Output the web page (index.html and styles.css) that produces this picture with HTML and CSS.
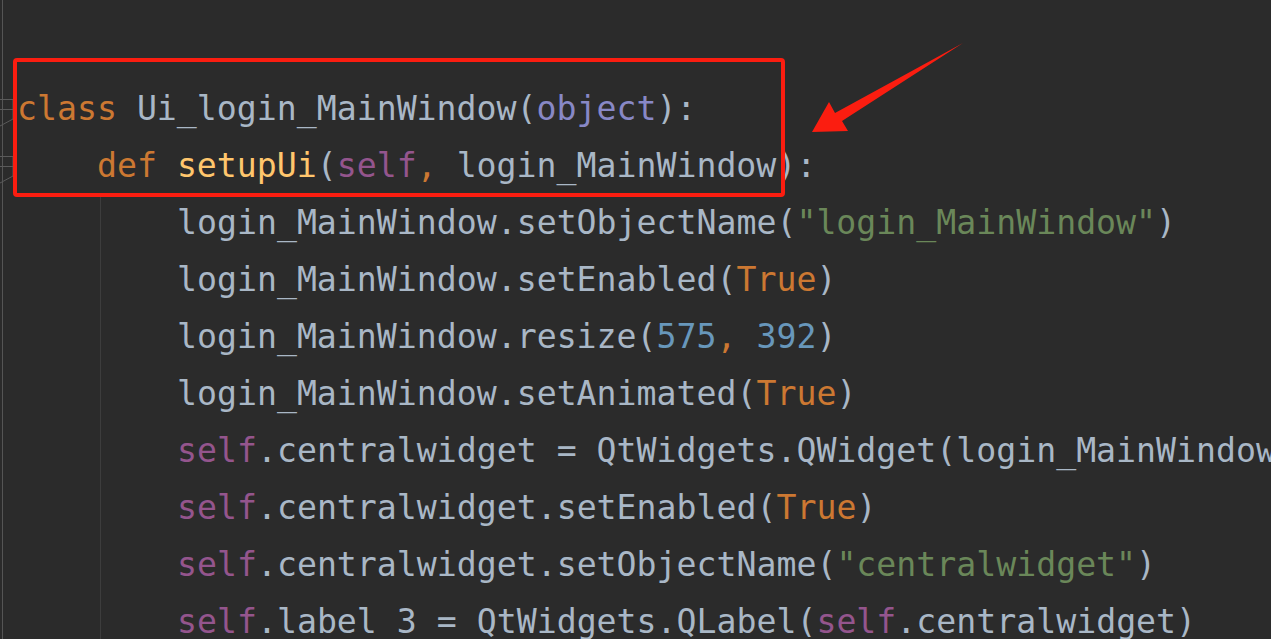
FILE: index.html
```html
<!DOCTYPE html>
<html lang="en">
<head>
    <meta charset="UTF-8">
    <title>login_MainWindow.py</title>
    <link rel="stylesheet" href="styles.css">
</head>
<body>
    <div class="editor">
        <div class="gutter">
            <svg width="16" height="639" viewBox="0 0 16 639">
                <line x1="2.5" y1="0" x2="2.5" y2="639" stroke="#555" stroke-width="1"/>
                <!-- fold markers, cut off by the crop -->
                <path d="M0 99.5H13M0 109.5H13M0 126L13 119V99.5" fill="none" stroke="#5a5a5a" stroke-width="1"/>
                <path d="M0 156.5H13M0 166.5H13M0 183L13 176V156.5" fill="none" stroke="#5a5a5a" stroke-width="1"/>
            </svg>
        </div>
        <div class="code">
            <div class="line"><span class="kw">class</span> Ui_login_MainWindow(<span class="bi">object</span>):</div>
            <div class="line">    <span class="kw">def</span> <span class="fn">setupUi</span>(<span class="self">self</span><span class="kw">,</span> login_MainWindow):</div>
            <div class="guide">
                <div class="line">login_MainWindow.setObjectName(<span class="str">"login_MainWindow"</span>)</div>
                <div class="line">login_MainWindow.setEnabled(<span class="kw">True</span>)</div>
                <div class="line">login_MainWindow.resize(<span class="num">575</span><span class="kw">,</span> <span class="num">392</span>)</div>
                <div class="line">login_MainWindow.setAnimated(<span class="kw">True</span>)</div>
                <div class="line"><span class="self">self</span>.centralwidget = QtWidgets.QWidget(login_MainWindow)</div>
                <div class="line"><span class="self">self</span>.centralwidget.setEnabled(<span class="kw">True</span>)</div>
                <div class="line"><span class="self">self</span>.centralwidget.setObjectName(<span class="str">"centralwidget"</span>)</div>
                <div class="line"><span class="self">self</span>.label_3 = QtWidgets.QLabel(<span class="self">self</span>.centralwidget)</div>
            </div>
        </div>
    </div>

    <div class="highlight"></div>
    <svg class="arrow" width="1271" height="639" viewBox="0 0 1271 639">
        <polygon points="963,43 842,121 848,131 812,132 829,102 835,113" fill="#fb1d10"/>
    </svg>
</body>
</html>
```
FILE: styles.css
```css
html, body {
    margin: 0;
    padding: 0;
    background-color: #2b2b2b;
    overflow: hidden;
}

body {
    width: 1271px;
    height: 639px;
    position: relative;
}

.editor {
    display: flex;
    height: 639px;
}

.gutter {
    width: 17px;
    flex: none;
}

.gutter svg {
    display: block;
}

.code {
    flex: 1;
    min-width: 0;
    padding-top: 80px;
    font-family: 'DejaVu Sans Mono', monospace;
    font-size: 33.2px;
    color: #a9b7c6;
    overflow: hidden;
}

.line {
    height: 57px;
    line-height: 57px;
    white-space: pre;
}

.guide {
    margin-left: 83px;
    padding-left: 76px;
    border-left: 1px solid #3d3d3d;
}

.kw {
    color: #cc7832;
}

.bi {
    color: #8888c6;
}

.fn {
    color: #ffc66d;
}

.self {
    color: #94558d;
}

.str {
    color: #6a8759;
}

.num {
    color: #6897bb;
}

/* annotation drawn over the screenshot */
.highlight {
    position: absolute;
    left: 13px;
    top: 58px;
    width: 764px;
    height: 131px;
    border: 4px solid #fb1d10;
    border-radius: 4px;
}

.arrow {
    position: absolute;
    left: 0;
    top: 0;
}
```
